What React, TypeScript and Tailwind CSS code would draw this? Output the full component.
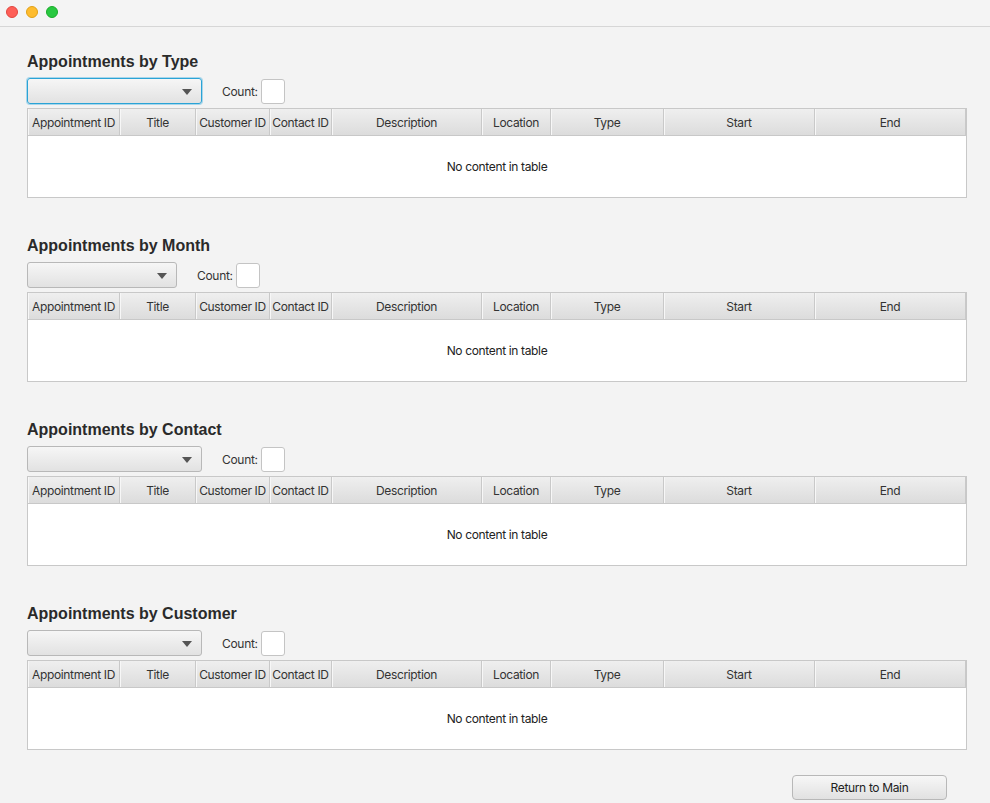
import React from "react";

const cols: { label: string; w: number }[] = [
  { label: "Appointment ID", w: 92 },
  { label: "Title", w: 76 },
  { label: "Customer ID", w: 74 },
  { label: "Contact ID", w: 62 },
  { label: "Description", w: 150 },
  { label: "Location", w: 69 },
  { label: "Type", w: 113 },
  { label: "Start", w: 151 },
  { label: "End", w: 151 },
];

function Section({
  title,
  comboWidth,
  focused,
}: {
  title: string;
  comboWidth: string;
  focused?: boolean;
}) {
  return (
    <div className="flex flex-col">
      <h2 className="h-[20px] leading-[20px] text-[16px] font-bold text-[#2a2a2a] [font-family:'Liberation_Sans',Arial,sans-serif]">
        {title}
      </h2>
      <div className="mt-[6px] flex h-[26px] items-center">
        <div
          className={
            "relative h-[26px] rounded-[3px] border bg-gradient-to-b from-[#f6f6f6] to-[#e2e2e2] " +
            comboWidth +
            (focused
              ? " border-[#2aa3d6] shadow-[0_0_0_1px_#a9d6ea]"
              : " border-[#b8b8b8]")
          }
        >
          <svg
            className="absolute right-[9px] top-[10px]"
            width="10"
            height="6"
            viewBox="0 0 10 6"
          >
            <path d="M0 0 L10 0 L5 6 Z" fill="#555" />
          </svg>
        </div>
        <span className="ml-[20px] pt-[1px] text-[12px] text-[#333] [font-family:Inter,sans-serif] tracking-[-0.3px]">
          Count:
        </span>
        <div className="ml-[3px] h-[25px] w-[24px] rounded-[3px] border border-[#c4c4c4] bg-white" />
      </div>
      <div className="mt-[4px] flex h-[90px] flex-col border border-[#c8c8c8] bg-white">
        <div className="flex h-[27px] border-b border-[#c8c8c8] bg-gradient-to-b from-[#efefef] to-[#dcdcdc]">
          {cols.map((c) => (
            <div
              key={c.label}
              style={{ width: c.w }}
              className="flex shrink-0 items-center justify-center pt-[1px] border-r border-[#c9c9c9] shadow-[inset_1px_0_0_#f7f7f7] text-[12px] text-[#333] [font-family:Inter,sans-serif] tracking-[-0.35px] whitespace-nowrap"
            >
              {c.label}
            </div>
          ))}
        </div>
        <div className="flex flex-1 items-center justify-center text-[12px] text-[#222] [font-family:Inter,sans-serif] tracking-[-0.35px]">
          No content in table
        </div>
      </div>
    </div>
  );
}

export default function App() {
  return (
    <div className="flex h-[803px] w-[990px] flex-col overflow-hidden bg-[#f3f3f3]">
      <div className="flex h-[27px] shrink-0 items-center gap-[8px] border-b border-[#d6d6d6] bg-[#f4f4f4] pl-[6px] pb-[2px]">
        <span className="h-[12px] w-[12px] rounded-full bg-[#fe5f57] border border-[#e2463f]" />
        <span className="h-[12px] w-[12px] rounded-full bg-[#febc2e] border border-[#e1a116]" />
        <span className="h-[12px] w-[12px] rounded-full bg-[#28c840] border border-[#1aab29]" />
      </div>
      <div className="flex flex-col gap-[38px] pl-[27px] pr-[23px] pt-[25px]">
        <Section title="Appointments by Type" comboWidth="w-[175px]" focused />
        <Section title="Appointments by Month" comboWidth="w-[150px]" />
        <Section title="Appointments by Contact" comboWidth="w-[175px]" />
        <Section title="Appointments by Customer" comboWidth="w-[175px]" />
      </div>
      <div className="flex justify-end pr-[43px] pt-[25px]">
        <button className="h-[25px] w-[155px] rounded-[4px] border border-[#b8b8b8] bg-gradient-to-b from-[#f7f7f7] to-[#e1e1e1] text-[12px] text-[#222] [font-family:Inter,sans-serif] tracking-[-0.35px]">
          Return to Main
        </button>
      </div>
    </div>
  );
}
